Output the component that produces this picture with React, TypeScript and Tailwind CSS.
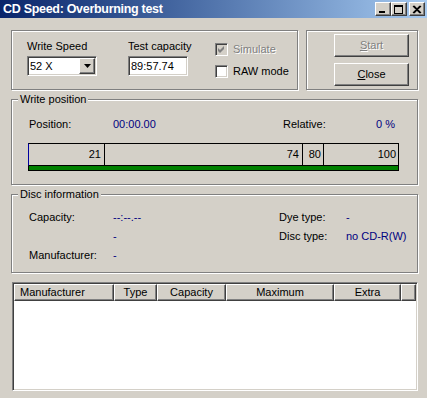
import React from "react";

const raised =
  "border border-t-white border-l-white border-b-[#404040] border-r-[#404040] shadow-[inset_-1px_-1px_0_#808080,inset_1px_1px_0_#d4d0c8]";
const sunken =
  "border border-t-[#808080] border-l-[#808080] border-b-white border-r-white shadow-[inset_1px_1px_0_#404040,inset_-1px_-1px_0_#d4d0c8]";
const etched = "border border-[#808080] shadow-[inset_1px_1px_0_#fff,1px_1px_0_#fff]";

type GroupProps = {
  label?: string;
  className?: string;
  children?: React.ReactNode;
};

const Group: React.FC<GroupProps> = ({ label, className, children }) => (
  <div className={`${etched} ${className ?? ""}`}>
    {label && (
      <div className="-mt-[7px] ml-[6px] h-[13px] w-fit bg-[#d4d0c8] px-[2px] leading-[13px]">
        {label}
      </div>
    )}
    {children}
  </div>
);

const Check: React.FC<{ checked?: boolean; disabled?: boolean }> = ({
  checked,
  disabled,
}) => (
  <div
    className={`flex h-[13px] w-[13px] items-center justify-center ${sunken} ${
      disabled ? "bg-[#d4d0c8]" : "bg-white"
    }`}
  >
    {checked && (
      <svg width="7" height="7" viewBox="0 0 7 7">
        <path
          d="M0 2 L2 4 L6 0 L6 3 L2 7 L0 5 Z"
          fill={disabled ? "#808080" : "#000"}
        />
      </svg>
    )}
  </div>
);

const TitleButton: React.FC<{ kind: "min" | "max" | "close" }> = ({ kind }) => (
  <div
    className={`flex h-[14px] w-[16px] items-center justify-center bg-[#d4d0c8] ${raised}`}
  >
    <svg width="10" height="9" viewBox="0 0 10 9">
      {kind === "min" && <rect x="1" y="6" width="6" height="2" fill="#000" />}
      {kind === "max" && (
        <path d="M0 0 H9 V9 H0 Z M1 2 V8 H8 V2 Z" fill="#000" fillRule="evenodd" />
      )}
      {kind === "close" && (
        <path
          d="M1 1 L8 8 M2 1 L9 8 M8 1 L1 8 M9 1 L2 8"
          stroke="#000"
          strokeWidth="1.1"
        />
      )}
    </svg>
  </div>
);

const Value: React.FC<{ children: React.ReactNode }> = ({ children }) => (
  <span className="text-[#000080]">{children}</span>
);

export default function App() {
  return (
    <div className="h-[398px] w-[427px] overflow-hidden bg-[#d4d0c8] font-['Liberation_Sans',Arial,sans-serif] text-[11px] text-black">
      {/* title bar */}
      <div className="flex h-[18px] items-center bg-linear-to-r from-[#0a246a] to-[#a6caf0] pr-[2px] pl-[3px]">
        <span className="flex-1 text-[12.5px] font-bold tracking-[-0.3px] text-white">
          CD Speed: Overburning test
        </span>
        <TitleButton kind="min" />
        <TitleButton kind="max" />
        <div className="w-[2px]" />
        <TitleButton kind="close" />
      </div>

      <div className="pt-[12px] pr-[9px] pl-[11px]">
        {/* top row */}
        <div className="flex gap-[8px]">
          <Group className="flex h-[60px] w-[287px] pt-[9px] pl-[15px]">
            <div className="w-[70px]">
              <div className="h-[13px] whitespace-nowrap leading-[13px]">Write Speed</div>
              <div className={`mt-[3px] flex h-[20px] items-center bg-white p-[1px] ${sunken}`}>
                <span className="flex-1 pl-[1px]">52 X</span>
                <div className={`flex h-[16px] w-[16px] items-center justify-center bg-[#d4d0c8] ${raised}`}>
                  <svg width="7" height="4" viewBox="0 0 7 4">
                    <path d="M0 0 H7 L3.5 4 Z" fill="#000" />
                  </svg>
                </div>
              </div>
            </div>
            <div className="ml-[31px] w-[60px]">
              <div className="h-[13px] whitespace-nowrap leading-[13px]">Test capacity</div>
              <div className={`mt-[3px] flex h-[20px] items-center bg-white pl-[2px] ${sunken}`}>
                89:57.74
              </div>
            </div>
            <div className="ml-[27px] pt-[3px]">
              <div className="flex h-[13px] items-center gap-[5px]">
                <Check checked disabled />
                <span className="text-[#808080] [text-shadow:1px_1px_0_#fff]">Simulate</span>
              </div>
              <div className="mt-[9px] flex h-[13px] items-center gap-[5px]">
                <Check />
                <span>RAW mode</span>
              </div>
            </div>
          </Group>
          <Group className="h-[60px] flex-1 pt-[3px] pl-[27px]">
            <div className={`flex h-[23px] w-[75px] items-center justify-center bg-[#d4d0c8] text-[#808080] [text-shadow:1px_1px_0_#fff] ${raised}`}>
              <span>
                <span className="underline">S</span>tart
              </span>
            </div>
            <div className={`mt-[6px] flex h-[23px] w-[75px] items-center justify-center bg-[#d4d0c8] ${raised}`}>
              <span>
                <span className="underline">C</span>lose
              </span>
            </div>
          </Group>
        </div>

        {/* write position */}
        <Group label="Write position" className="mt-[9px] h-[86px]">
          <div className="mt-[12px] flex h-[13px] items-center pr-[22px] pl-[17px] leading-[13px]">
            <span className="w-[84px]">Position:</span>
            <span className="flex-1">
              <Value>00:00.00</Value>
            </span>
            <span className="w-[52px]">Relative:</span>
            <span className="w-[60px] text-right">
              <Value>0 %</Value>
            </span>
          </div>
          <div className="mt-[12px] ml-[16px] w-[371px]">
            <div className="flex h-[23px] border border-black border-l-[#0000a0] leading-[21px]">
              <div className="w-[76px] border-r border-black pr-[3px] text-right">21</div>
              <div className="w-[198px] border-r border-black pr-[3px] text-right">74</div>
              <div className="w-[21px] border-r border-black pr-[2px] text-right">80</div>
              <div className="flex-1 pr-[2px] text-right">100</div>
            </div>
            <div className="h-[5px] border-x border-b border-black bg-[#008000]" />
          </div>
        </Group>

        {/* disc information */}
        <Group label="Disc information" className="mt-[9px] h-[79px]">
          <div className="mt-[7px] pl-[17px] leading-[19px]">
            <div className="flex h-[19px]">
              <span className="w-[84px]">Capacity:</span>
              <span className="w-[166px]">
                <Value>--:--.--</Value>
              </span>
              <span className="w-[67px]">Dye type:</span>
              <Value>-</Value>
            </div>
            <div className="flex h-[19px]">
              <span className="w-[84px]" />
              <span className="w-[166px]">
                <Value>-</Value>
              </span>
              <span className="w-[67px]">Disc type:</span>
              <Value>no CD-R(W)</Value>
            </div>
            <div className="flex h-[19px]">
              <span className="w-[84px]">Manufacturer:</span>
              <Value>-</Value>
            </div>
          </div>
        </Group>

        {/* list */}
        <div className={`mt-[9px] ml-[1px] h-[109px] w-[406px] bg-white p-[1px] ${sunken}`}>
          <div className="flex h-[17px] leading-[15px]">
            <div className={`w-[100px] bg-[#d4d0c8] pl-[5px] ${raised}`}>Manufacturer</div>
            <div className={`w-[43px] bg-[#d4d0c8] text-center ${raised}`}>Type</div>
            <div className={`w-[69px] bg-[#d4d0c8] text-center ${raised}`}>Capacity</div>
            <div className={`w-[108px] bg-[#d4d0c8] text-center ${raised}`}>Maximum</div>
            <div className={`w-[67px] bg-[#d4d0c8] text-center ${raised}`}>Extra</div>
            <div className={`flex-1 bg-[#d4d0c8] ${raised}`} />
          </div>
        </div>
      </div>
    </div>
  );
}
